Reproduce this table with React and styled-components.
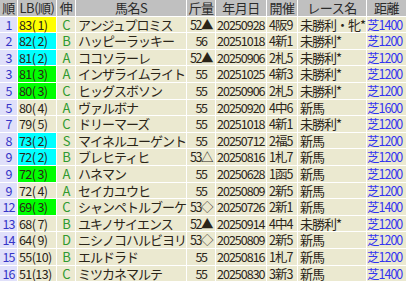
import styled, { createGlobalStyle } from "styled-components"

const Global = createGlobalStyle`
body {
    margin: 0;
    background: #fff;
    font-family: "Noto Sans CJK JP", "Noto Sans", sans-serif;
}
`

const cols = "17px 38px 18px 110px 28px 50px 30px 68px 39px"

const Table = styled.div`
display: flex;
flex-direction: column;
gap: 1px;
width: 406px;
`

const Row = styled.div`
display: grid;
grid-template-columns: ${cols};
gap: 1px;
height: 15.6px;
`

const Cell = styled.div`
background: ${p => p.$bg || "#ebe9d0"};
color: ${p => p.$color || "#2a2418"};
text-align: ${p => p.$align || "left"};
padding-left: ${p => (p.$align === "center" ? 0 : p.$pad || "2px")};
font-size: ${p => p.$size || "13px"};
line-height: 15.6px;
letter-spacing: ${p => p.$ls || "-1px"};
white-space: pre;
`

const Head = styled(Cell)`
background: #c0c0c0;
color: #2b2b2b;
text-align: center;
padding-left: 0;
letter-spacing: -0.5px;
`

const Num = styled(Cell)`
background: #e0e0fa;
color: #3535c8;
text-align: center;
padding-left: 0;
font-size: 12.5px;
`

const lbColors = { y: "#ffff00", c: "#00ffff", g: "#00ff00" }

const rows = [
    ["1", "83( 1)", "y", "C", "アンジュプロミス", "52▲", "20250928", "4阪9", "未勝利・牝*", "芝1400"],
    ["2", "82( 2)", "c", "B", "ハッピーラッキー", "56", "20251018", "4新1", "未勝利*", "芝1200"],
    ["3", "81( 2)", "c", "A", "ココソラーレ", "52▲", "20250906", "2札5", "未勝利*", "芝1200"],
    ["3", "81( 3)", "g", "A", "インザライムライト", "55", "20251025", "4新3", "未勝利*", "芝1200"],
    ["5", "80( 3)", "g", "C", "ヒッグスボソン", "55", "20250906", "2札5", "未勝利*", "芝1200"],
    ["5", "80( 4)", "", "A", "ヴァルボナ", "55", "20250920", "4中6", "新馬", "芝1600"],
    ["7", "79( 5)", "", "C", "ドリーマーズ", "55", "20251018", "4新1", "未勝利*", "芝1200"],
    ["8", "73( 2)", "c", "S", "マイネルユーゲント", "55", "20250712", "2福5", "新馬", "芝1200"],
    ["9", "72( 2)", "c", "B", "ブレヒティヒ", "53△", "20250816", "1札7", "新馬", "芝1200"],
    ["9", "72( 3)", "g", "A", "ハネマン", "55", "20250628", "1函5", "新馬", "芝1200"],
    ["9", "72( 4)", "", "A", "セイカユウヒ", "55", "20250809", "2新5", "新馬", "芝1200"],
    ["12", "69( 3)", "g", "C", "シャンペトルブーケ", "53◇", "20250726", "2新1", "新馬", "芝1400"],
    ["13", "68( 7)", "", "B", "ユキノサイエンス", "52▲", "20250914", "4中4", "未勝利*", "芝1200"],
    ["14", "64( 9)", "", "D", "ニシノコハルビヨリ", "53◇", "20250809", "2新5", "新馬", "芝1200"],
    ["15", "55(10)", "", "B", "エルドラド", "55", "20250816", "1札7", "新馬", "芝1200"],
    ["16", "51(13)", "", "C", "ミツカネマルテ", "55", "20250830", "3新3", "新馬", "芝1400"],
]

const headers = ["順", "LB(順)", "伸", "馬名S", "斤量", "年月日", "開催", "レース名", "距離"]

const App = () => {
    return (
        <>
            <Global />
            <Table>
                <Row>
                    {headers.map(h => <Head key={h}>{h}</Head>)}
                </Row>
                {rows.map((r, i) => (
                    <Row key={i}>
                        <Num>{r[0]}</Num>
                        <Cell $bg={lbColors[r[2]]} $size="12.5px" $ls="-0.6px" $pad="1px">{r[1]}</Cell>
                        <Cell $align="center" $color="#2f9a2f">{r[3]}</Cell>
                        <Cell>{r[4]}</Cell>
                        <Cell $align="center" $size="12.5px" $ls="-1.5px">{r[5]}</Cell>
                        <Cell $pad="1px" $size="12.5px">{r[6]}</Cell>
                        <Cell $size="12.5px">{r[7]}</Cell>
                        <Cell>{r[8]}</Cell>
                        <Cell $color="#3434f0" $size="12.5px" $pad="0">{r[9]}</Cell>
                    </Row>
                ))}
            </Table>
        </>
    )
}

export default App
